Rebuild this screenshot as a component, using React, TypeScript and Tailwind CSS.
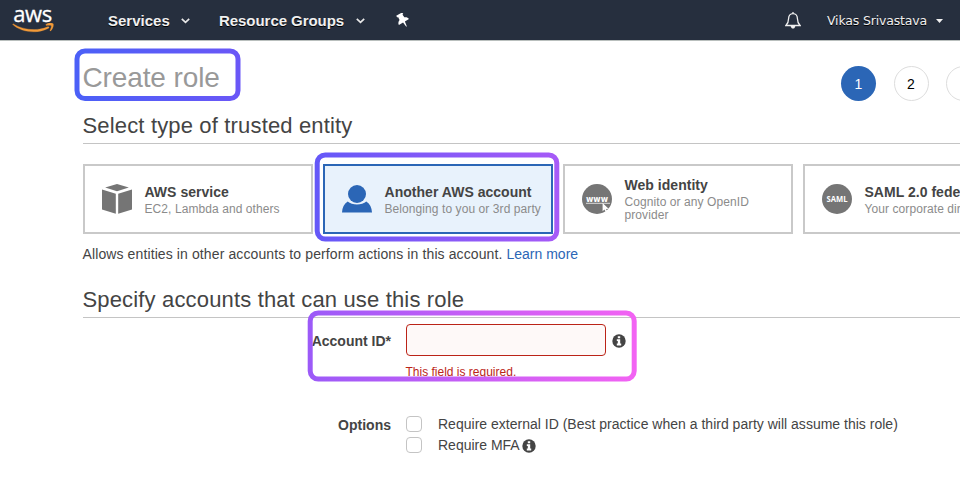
import type { ReactNode } from "react";

function Chevron({ className = "" }: { className?: string }) {
  return (
    <svg className={className} width="9" height="6" viewBox="0 0 9 6" fill="none" stroke="#e8e8e8" strokeWidth="1.7">
      <path d="M0.8 0.8 L4.5 4.3 L8.2 0.8" />
    </svg>
  );
}

function InfoIcon({ className = "" }: { className?: string }) {
  return (
    <svg className={className} width="14" height="14" viewBox="0 0 14 14">
      <circle cx="7" cy="7" r="6.7" fill="#444444" />
      <path d="M5.8 2.2 H8.2 V4.2 H5.8 Z M4.8 5.3 H8.2 V9.6 H9.2 V11.4 H4.8 V9.6 H5.8 V7.1 H4.8 Z" fill="#ffffff" />
    </svg>
  );
}

function PinIcon() {
  return (
    <svg className="ml-[31px]" width="14" height="15" viewBox="0 0 14 15" fill="#ffffff">
      <g transform="rotate(-30 7 7)">
        <path d="M3.2 0 H10.2 V2 H9.2 L9.5 5.3 C11.5 6 12.6 7.3 12.6 9.2 H7.9 L7.1 14.4 H6.5 L5.8 9.2 H1 C1 7.3 2.1 6 4 5.3 L4.2 2 H3.2 Z" />
      </g>
    </svg>
  );
}

function AwsLogo() {
  return (
    <div className="flex h-[40px] w-[42px] flex-col items-center">
      <span className="mt-[-3px] h-[26px] whitespace-nowrap font-['Open_Sans',sans-serif] text-[22px] font-medium leading-[32px] tracking-[-0.5px] text-white [-webkit-text-stroke:0.3px_#ffffff]">
        aws
      </span>
      <svg width="42" height="11" viewBox="0 0 42 11" fill="none">
        <path d="M1.4 0.9 C11 7 25 8.6 35.6 3.8 C37 3.2 37.6 4.5 36.6 5.2 C26 11.2 9.4 9.6 0.8 1.6 C0.5 1.2 0.9 0.6 1.4 0.9 Z" fill="#f29a38" stroke="#f29a38" strokeWidth="0.3" />
        <path d="M34 1.4 C36.5 -0.4 40.4 -0.2 41.2 0.8 C41.8 2 41 6 38.6 7.9 C38.2 8.2 37.8 8 38 7.5 C38.6 5.9 39.7 3.4 39.2 2.7 C38.7 2 36 2.3 34.5 2.4 C33.7 2.4 33.5 1.8 34 1.4 Z" fill="#f29a38" stroke="#f29a38" strokeWidth="0.3" />
      </svg>
    </div>
  );
}

function Header() {
  return (
    <header className="flex h-[41px] items-center border-b border-[#b9bfbd] bg-[#262f3e] pl-[11.5px] text-[#f0f0f0]">
      <AwsLogo />
      <nav className="ml-[54.5px] flex items-center text-[15px] font-bold leading-[20px] [text-shadow:0_1px_0_#000]">
        <span className="mt-[2px] w-[73px] whitespace-nowrap">Services</span>
        <Chevron className="mt-[2px]" />
        <span className="ml-[29px] mt-[2px] w-[137px] whitespace-nowrap tracking-[-0.05px]">Resource Groups</span>
        <Chevron className="mt-[2px]" />
        <PinIcon />
      </nav>
      <svg className="ml-auto" width="16" height="17" viewBox="0 0 16 17" fill="none" stroke="#f0f0f0" strokeWidth="1.3">
        <path d="M8 0 V1.6 M8 1.6 C5 1.6 3.6 4 3.6 6.5 C3.6 10.5 2.6 11.8 0.9 13.5 H15.1 C13.4 11.8 12.4 10.5 12.4 6.5 C12.4 4 11 1.6 8 1.6 Z" />
        <path d="M5.7 14 H10.3 C10 17.4 6 17.4 5.7 14 Z" fill="#f0f0f0" stroke="none" />
      </svg>
      <span className="ml-[26px] mt-[2px] w-[109px] whitespace-nowrap font-['DejaVu_Sans',sans-serif] text-[12.5px] tracking-[-0.17px] [text-shadow:0_1px_0_#000]">
        Vikas Srivastava
      </span>
      <svg className="mr-[17px] mt-[2px]" width="7" height="4" viewBox="0 0 7 4">
        <path d="M0 0 H7 L3.5 4 Z" fill="#f0f0f0" />
      </svg>
    </header>
  );
}

function Stepper() {
  return (
    <div className="mr-[-21px] flex shrink-0 gap-[17.5px] text-[14px]">
      <div className="flex size-[35px] items-center justify-center rounded-full bg-[#2b66b6] pt-px text-white">1</div>
      <div className="flex size-[35px] items-center justify-center rounded-full border border-[#dddddd] pt-px text-black">2</div>
      <div className="size-[35px] rounded-full border border-[#dddddd]" />
    </div>
  );
}

function CubeIcon() {
  return (
    <svg width="30" height="30" viewBox="0 0 30 30" fill="#757575">
      <path d="M15 0 L26.8 3.6 L15 7.2 L3.2 3.6 Z" />
      <path d="M0 5.5 L13.8 9.7 V29.7 L0 25.4 Z" />
      <path d="M30 5.5 L16.2 9.7 V29.7 L30 25.4 Z" />
    </svg>
  );
}

function PersonIcon() {
  return (
    <svg width="30" height="28" viewBox="0 0 30 28" fill="#2b66b6">
      <circle cx="15" cy="9" r="9" />
      <path d="M5.7 16.6 C10 20.4 20 20.4 24.3 16.6 C28 19.2 29.7 22.6 30 27.5 H0 C0.3 22.6 2 19.2 5.7 16.6 Z" />
    </svg>
  );
}

function WwwIcon() {
  return (
    <svg width="30" height="30" viewBox="0 0 30 30">
      <circle cx="15" cy="15" r="15" fill="#757575" />
      <text x="15" y="17.6" textAnchor="middle" textLength="22" lengthAdjust="spacingAndGlyphs" fill="#ffffff" fontFamily="DejaVu Sans, sans-serif" fontWeight="700" fontSize="9">
        www
      </text>
      <path d="M4 19.3 H28" stroke="#dddddd" strokeWidth="1" />
      <path d="M20.6 19 V27.2 L22.5 25.5 L24 28.4 L25.4 27.7 L24 25 L26.6 24.8 Z" fill="#ffffff" />
    </svg>
  );
}

function SamlIcon() {
  return (
    <svg width="30" height="30" viewBox="0 0 30 30">
      <circle cx="15" cy="15" r="15" fill="#757575" />
      <text x="15" y="18" textAnchor="middle" textLength="21" lengthAdjust="spacingAndGlyphs" fill="#ffffff" fontFamily="Open Sans, sans-serif" fontWeight="700" fontSize="8">
        SAML
      </text>
    </svg>
  );
}

type CardProps = { icon: ReactNode; title: string; children: ReactNode; selected?: boolean };

function EntityCard({ icon, title, children, selected = false }: CardProps) {
  return (
    <div
      className={
        "flex h-[70px] w-[230px] shrink-0 items-center border-2 pl-[17px] " +
        (selected ? "border-[#2b66b6] bg-[#e8f2fc]" : "border-[#c9c9c9] bg-white")
      }
    >
      <div className="w-[42.5px] shrink-0">{icon}</div>
      <div className="whitespace-nowrap">
        <div className="pb-[2px] text-[14px] font-bold leading-[18px] tracking-[0.03px] text-[#444444]">{title}</div>
        <div className="text-[12px] leading-[13px] tracking-[0.08px] text-[#8b8b8b]">{children}</div>
      </div>
    </div>
  );
}

function SectionTitle({ children }: { children: ReactNode }) {
  return (
    <h2 className="ml-[-0.5px] h-[31px] whitespace-nowrap border-b border-[#c4c4c4] text-[22px] leading-[26px] tracking-[0.16px] text-[#444444]">
      {children}
    </h2>
  );
}

function Highlights() {
  return (
    <svg className="pointer-events-none absolute left-0 top-0" width="960" height="497" fill="none" strokeWidth="5">
      <defs>
        <linearGradient id="indigo">
          <stop stopColor="#4b60f7" />
          <stop offset="1" stopColor="#6a57f7" />
        </linearGradient>
        <linearGradient id="violet">
          <stop stopColor="#6558f8" />
          <stop offset="1" stopColor="#a65af7" />
        </linearGradient>
        <linearGradient id="pink">
          <stop stopColor="#9c5af8" />
          <stop offset="1" stopColor="#f263f3" />
        </linearGradient>
      </defs>
      <rect x="77" y="51" width="161" height="47.5" rx="8" stroke="url(#indigo)" />
      <rect x="317.2" y="155" width="239.6" height="84" rx="8" stroke="url(#violet)" />
      <rect x="310.2" y="313" width="324" height="66" rx="8" stroke="url(#pink)" />
    </svg>
  );
}

export default function App() {
  return (
    <div className="relative h-[497px] w-[960px] overflow-hidden bg-white font-['Liberation_Sans',Arial,sans-serif] text-[#444444]">
      <Header />
      <main className="flex flex-col pl-[83px]">
        <div className="mt-[25px] flex h-[35px] justify-between">
          <h1 className="ml-[-0.5px] text-[28px] leading-[23px] tracking-[-0.12px] text-[#999999]">Create role</h1>
          <Stepper />
        </div>
        <div className="mt-[12px]">
          <SectionTitle>Select type of trusted entity</SectionTitle>
        </div>
        <div className="mt-[20px] flex gap-[10px]">
          <EntityCard icon={<CubeIcon />} title="AWS service">EC2, Lambda and others</EntityCard>
          <EntityCard icon={<PersonIcon />} title="Another AWS account" selected>Belonging to you or 3rd party</EntityCard>
          <EntityCard icon={<WwwIcon />} title="Web identity">
            Cognito or any OpenID
            <br />
            provider
          </EntityCard>
          <EntityCard icon={<SamlIcon />} title="SAML 2.0 federation">Your corporate directory</EntityCard>
        </div>
        <p className="ml-[-0.5px] mt-[11px] text-[14px] leading-[18px] tracking-[0.11px]">
          Allows entities in other accounts to perform actions in this account.{" "}
          <span className="tracking-normal text-[#2b66b6]">Learn more</span>
        </p>
        <div className="mt-[24px]">
          <SectionTitle>Specify accounts that can use this role</SectionTitle>
        </div>
        <div className="mt-[6px] flex h-[32px] items-center">
          <span className="mt-[2px] w-[308px] text-right text-[14px] font-bold">Account ID*</span>
          <div className="ml-[15px] h-[32px] w-[200px] rounded-[4px] border border-[#bb2418] bg-[#fef9f8]" />
          <InfoIcon className="ml-[6px] mt-[2px]" />
        </div>
        <p className="ml-[322.5px] mt-[8px] h-[16px] text-[12px] leading-[16px] text-[#bb2418]">This field is required.</p>
        <div className="mt-[34px] flex text-[14px] leading-[20px]">
          <span className="mt-px w-[308px] text-right font-bold">Options</span>
          <div className="ml-[15px] flex flex-col gap-px">
            <label className="flex h-[20px] items-center gap-[16px] whitespace-nowrap tracking-[0.01px]">
              <span className="size-[16px] rounded-[4px] border border-[#c4c4c4]" />
              Require external ID (Best practice when a third party will assume this role)
            </label>
            <label className="flex h-[20px] items-center gap-[16px] whitespace-nowrap">
              <span className="size-[16px] rounded-[4px] border border-[#c4c4c4]" />
              <span className="flex items-center gap-[2px]">
                Require MFA
                <InfoIcon className="mt-[2px]" />
              </span>
            </label>
          </div>
        </div>
      </main>
      <Highlights />
    </div>
  );
}
